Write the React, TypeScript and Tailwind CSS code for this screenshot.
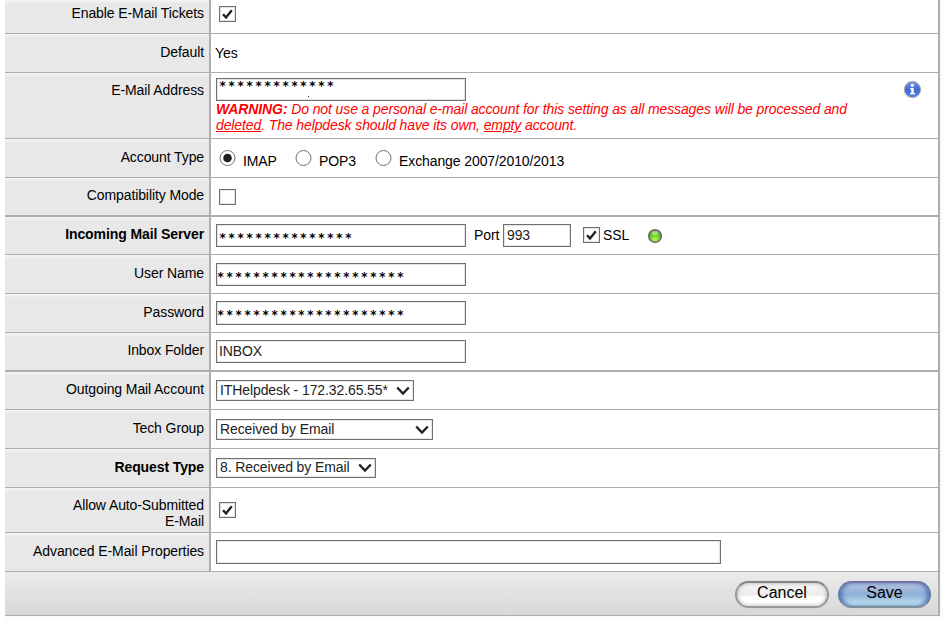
import React from "react";

interface RowProps {
  label: string;
  height: string;
  labelPad?: string;
  cellPad: string;
  bold?: boolean;
  thick?: boolean;
  children?: React.ReactNode;
}

const Row = ({
  label,
  height,
  labelPad = "pt-[9px]",
  cellPad,
  bold,
  thick,
  children,
}: RowProps) => {
  return (
    <div
      className={`flex border-[#aeaeae] ${height} ${
        thick ? "border-b-2" : "border-b"
      }`}
    >
      <div
        className={`w-[206px] shrink-0 border-r-2 border-[#aeaeae] bg-linear-to-b from-[#f6f6f6] to-[#e8e8e8] to-[4px] pr-[5px] text-right ${labelPad} ${
          bold ? "font-bold" : ""
        }`}
      >
        {label}
      </div>
      <div className={`flex flex-1 items-start pl-[5px] ${cellPad}`}>
        {children}
      </div>
    </div>
  );
};

interface CheckProps {
  checked?: boolean;
  className?: string;
}

const Check = ({ checked, className = "" }: CheckProps) => {
  return (
    <span
      className={`flex h-[16px] w-[17px] shrink-0 items-center justify-center border border-[#707070] bg-white shadow-[inset_0_0_0_1px_#e4e4e4] ${className}`}
    >
      {checked && (
        <svg width="15" height="14" viewBox="0 0 15 14">
          <path
            d="M3 7.2 L6 10.4 L11.8 3.2"
            fill="none"
            stroke="#222"
            strokeWidth="2.4"
          />
        </svg>
      )}
    </span>
  );
};

const Radio = ({ checked }: { checked?: boolean }) => {
  return (
    <svg width="17" height="17" viewBox="0 0 17 17" className="shrink-0">
      <circle cx="8.5" cy="8" r="7.5" fill="#fff" stroke="#707070" />
      {checked && <circle cx="8.5" cy="8" r="4.3" fill="#1e1e1e" />}
    </svg>
  );
};

interface BoxProps {
  size: string;
  children?: React.ReactNode;
}

const Box = ({ size, children }: BoxProps) => {
  return (
    <div
      className={`relative shrink-0 border border-[#707070] bg-white pl-[2px] text-[#222] shadow-[inset_0_0_0_1px_#e4e4e4] ${size}`}
    >
      {children}
    </div>
  );
};

const Stars = ({ count, className }: { count: number; className: string }) => {
  return (
    <div
      className={`font-['DejaVu_Sans_Mono',monospace] text-[12px] leading-[16px] font-bold tracking-[1.76px] text-black ${className}`}
    >
      {"*".repeat(count)}
    </div>
  );
};

const Select = ({ size, text }: { size: string; text: string }) => {
  return (
    <div
      className={`flex shrink-0 items-start justify-between border border-[#707070] bg-white pr-[3px] pl-[3px] text-[#222] shadow-[inset_0_0_0_1px_#e4e4e4] ${size}`}
    >
      <span className="whitespace-nowrap">{text}</span>
      <svg width="14" height="10" viewBox="0 0 14 10" className="mt-[4px]">
        <path
          d="M1.2 1.5 L7 7.5 L12.8 1.5"
          fill="none"
          stroke="#222"
          strokeWidth="2.4"
        />
      </svg>
    </div>
  );
};

const InfoIcon = () => {
  return (
    <svg width="19" height="19" viewBox="0 0 19 19">
      <defs>
        <linearGradient id="info" x1="0" y1="0" x2="0" y2="1">
          <stop offset="0" stopColor="#7d9ce6" />
          <stop offset="0.5" stopColor="#4169cf" />
          <stop offset="1" stopColor="#5b88ea" />
        </linearGradient>
      </defs>
      <circle cx="9.5" cy="9.5" r="8.2" fill="url(#info)" stroke="#b4b4b4" />
      <circle cx="9.4" cy="5.3" r="1.6" fill="#fff" />
      <path d="M7 8 H10.8 V13 H12 V14.2 H7 V13 H8.2 V9.2 H7 Z" fill="#fff" />
    </svg>
  );
};

const Led = () => {
  return (
    <svg width="16" height="16" viewBox="0 0 16 16">
      <defs>
        <radialGradient id="led" cx="0.5" cy="0.8" r="0.8">
          <stop offset="0" stopColor="#b4f65c" />
          <stop offset="0.5" stopColor="#6cd022" />
          <stop offset="1" stopColor="#3f8a18" />
        </radialGradient>
      </defs>
      <circle cx="8" cy="8" r="6.3" fill="url(#led)" stroke="#6c6c6c" strokeWidth="1.6" />
      <ellipse cx="8" cy="5" rx="3.6" ry="2" fill="#fff" opacity="0.45" />
    </svg>
  );
};

export default function App() {
  return (
    <div className="h-[620px] w-[943px] overflow-hidden bg-[#fbfbfb] pl-[5px] font-['Liberation_Sans',Arial,sans-serif] text-[14px] leading-[16px] tracking-[-0.1px] text-black shadow-[inset_5px_0_0_#fff]">
      <div className="w-[935px] border-r-2 border-[#aeaeae] bg-white">
        <Row label="Enable E-Mail Tickets" height="h-[34px]" labelPad="pt-[5px]" cellPad="pt-[6px]">
          <Check checked className="ml-[3px]" />
        </Row>
        <Row label="Default" height="h-[39px]" labelPad="pt-[10px]" cellPad="pt-[11px]">
          <span className="-ml-px">Yes</span>
        </Row>
        <Row label="E-Mail Address" height="h-[66px]" cellPad="pt-[5px]">
          <div className="w-[687px]">
            <Box size="w-[250px] h-[23px]">
              <Stars count={13} className="-mt-px" />
              <span className="absolute top-[17px] left-[91px] h-px w-px bg-[#333]" />
            </Box>
            <p className="w-[660px] tracking-[-0.11px] text-[#f00] italic">
              <b>WARNING:</b> Do not use a personal e-mail account for this
              setting as all messages will be processed and{" "}
              <u>deleted</u>. The helpdesk should have its own, <u>empty</u>{" "}
              account.
            </p>
          </div>
          <div className="mt-[2px]">
            <InfoIcon />
          </div>
        </Row>
        <Row label="Account Type" height="h-[39px]" labelPad="pt-[10px]" cellPad="pt-[11px]">
          <div className="flex pl-[3px]">
            <Radio checked />
            <span className="w-[59px] pt-[3px] pl-[7px]">IMAP</span>
            <Radio />
            <span className="w-[63px] pt-[3px] pl-[7px]">POP3</span>
            <Radio />
            <span className="pt-[3px] pl-[7px]">Exchange 2007/2010/2013</span>
          </div>
        </Row>
        <Row label="Compatibility Mode" height="h-[39px]" cellPad="pt-[11px]" thick>
          <Check className="ml-[3px]" />
        </Row>
        <Row label="Incoming Mail Server" height="h-[38px]" cellPad="pt-[7px]" bold>
          <Box size="w-[250px] h-[23px]">
            <Stars count={15} className="pt-[5px]" />
          </Box>
          <span className="w-[37px] pt-[3px] pl-[8px]">Port</span>
          <Box size="w-[68px] h-[23px] pt-[2px]">
            <span className="pl-px">993</span>
          </Box>
          <Check checked className="mt-[3px] ml-[12px]" />
          <span className="w-[47px] pt-[3px] pl-[3px]">SSL</span>
          <div className="pt-[4px]">
            <Led />
          </div>
        </Row>
        <Row label="User Name" height="h-[39px]" labelPad="pt-[10px]" cellPad="pt-[8px]">
          <Box size="w-[250px] h-[23px]">
            <Stars count={21} className="-ml-[2px] pt-[5px]" />
          </Box>
        </Row>
        <Row label="Password" height="h-[39px]" labelPad="pt-[10px]" cellPad="pt-[7px]">
          <Box size="w-[250px] h-[24px]">
            <Stars count={21} className="-ml-[2px] pt-[5px]" />
          </Box>
        </Row>
        <Row label="Inbox Folder" height="h-[39px]" cellPad="pt-[7px]" thick>
          <Box size="w-[250px] h-[23px] pt-[2px]">INBOX</Box>
        </Row>
        <Row label="Outgoing Mail Account" height="h-[38px]" cellPad="pt-[8px]">
          <Select size="w-[198px] h-[21px] pt-px" text="ITHelpdesk - 172.32.65.55*" />
        </Row>
        <Row label="Tech Group" height="h-[39px]" labelPad="pt-[10px]" cellPad="pt-[9px]">
          <Select size="w-[217px] h-[21px] pt-px" text="Received by Email" />
        </Row>
        <Row label="Request Type" height="h-[39px]" labelPad="pt-[10px]" cellPad="pt-[9px]" bold>
          <Select size="w-[160px] h-[20px]" text="8. Received by Email" />
        </Row>
        <Row label="Allow Auto-Submitted E-Mail" height="h-[45px]" labelPad="pt-[9px] pl-[60px]" cellPad="pt-[14px]">
          <Check checked className="ml-[3px]" />
        </Row>
        <Row label="Advanced E-Mail Properties" height="h-[39px]" labelPad="pt-[10px]" cellPad="pt-[7px]">
          <Box size="w-[505px] h-[24px]" />
        </Row>
        <div className="flex h-[44px] justify-end gap-[9px] border-b border-[#aeaeae] bg-linear-to-b from-[#ebebeb] to-[#d8d8d8] pt-[9px] pr-[7px] text-[16px] leading-[20px] tracking-normal">
          <button className="h-[27px] w-[94px] rounded-full border-2 border-x-[#999] border-t-[#858585] border-b-[#999] bg-linear-to-b from-[#f8f8f8] from-0% via-[#ececec] via-50% to-white to-60% pb-[3px] shadow-[inset_0_0_4px_#aaa,0_0_1px_#bbb]">
            Cancel
          </button>
          <button className="h-[27px] w-[93px] rounded-full border-2 border-x-[#667da8] border-t-[#7770a4] border-b-[#7f8d9c] bg-linear-to-b from-[#b4c3e2] from-0% via-[#8fafd8] via-50% to-[#c4ebf2] pb-[3px] shadow-[inset_3px_0_4px_-1px_#4c78b6,inset_-3px_0_4px_-1px_#4c78b6,0_0_1px_#bbb]">
            Save
          </button>
        </div>
      </div>
    </div>
  );
}
